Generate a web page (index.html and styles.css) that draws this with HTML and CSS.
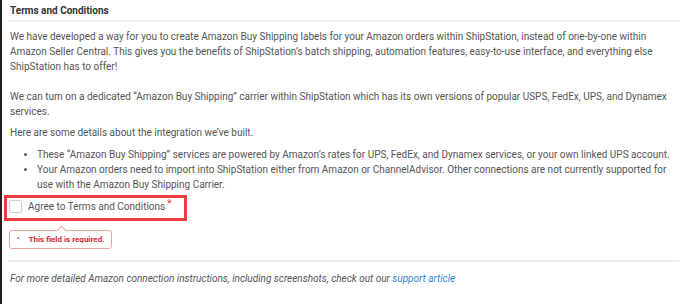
FILE: index.html
```html
<!DOCTYPE html>
<html lang="en">
<head>
<meta charset="utf-8">
<title>Terms and Conditions</title>
<link rel="stylesheet" href="styles.css">
</head>
<body>
<div class="panel">
  <h2 class="panel-title">Terms and Conditions</h2>
  <p class="para para-first">We have developed a way for you to create Amazon Buy Shipping labels for your Amazon orders within ShipStation, instead of one-by-one within Amazon Seller Central. This gives you the benefits of ShipStation’s batch shipping, automation features, easy-to-use interface, and everything else ShipStation has to offer!</p>
  <p class="para para-second">We can turn on a dedicated “Amazon Buy Shipping” carrier within ShipStation which has its own versions of popular USPS, FedEx, UPS, and Dynamex services.</p>
  <p class="para para-third">Here are some details about the integration we’ve built.</p>
  <ul class="details">
    <li>These “Amazon Buy Shipping” services are powered by Amazon’s rates for UPS, FedEx, and Dynamex services, or your own linked UPS account.</li>
    <li>Your Amazon orders need to import into ShipStation either from Amazon or ChannelAdvisor. Other connections are not currently supported for use with the Amazon Buy Shipping Carrier.</li>
  </ul>
  <label class="agree-row">
    <span class="checkbox"></span>
    <span class="agree-text">Agree to Terms and Conditions</span><span class="required">*</span>
  </label>
  <div class="error-tip">
    <span class="error-dot">•</span>
    <span class="error-text">This field is required.</span>
  </div>
  <div class="footer-note">
    For more detailed Amazon connection instructions, including screenshots, check out our <a class="link" href="#">support article</a>
  </div>
</div>
</body>
</html>
```

FILE: styles.css
```css
html, body {
  margin: 0;
  padding: 0;
  height: 100%;
  background: #ffffff;
}
body {
  border-left: 2px solid #1e1e1e;
  box-sizing: border-box;
  font-family: Roboto, "Liberation Sans", Arial, sans-serif;
  font-size: 10px;
  color: #555555;
}
.panel {
  margin: 0 16px 0 6px;
  padding-top: 4px;
}
.panel-title {
  margin: 0;
  padding: 0 2px 2px;
  font-size: 10px;
  line-height: 14px;
  font-weight: 700;
  color: #333333;
  border-bottom: 2px solid #ededed;
}
.para {
  margin: 0;
  padding: 0 2px;
  line-height: 15px;
}
.para-first { margin-top: 7px; }
.para-second { margin-top: 15px; }
.para-third { margin-top: 6px; }
.details {
  margin: 7px 0 0;
  padding: 0 0 0 29px;
  line-height: 15px;
}
.agree-row {
  display: flex;
  align-items: center;
  width: fit-content;
  margin: 3px 0 0 -4px;
  padding: 2px 12px 5px 2px;
  border: 3px solid #ee3b3f;
}
.checkbox {
  width: 11px;
  height: 11px;
  border: 1px solid #cfcfcf;
  border-radius: 2px;
  background: #fff;
  margin-right: 6px;
}
.agree-text {
  font-size: 10px;
  line-height: 13px;
  color: #555555;
}
.required {
  color: #e5383b;
  font-size: 10px;
  line-height: 10px;
  align-self: flex-start;
  margin-left: 2px;
  margin-top: -1px;
}
.error-tip {
  position: relative;
  display: flex;
  align-items: center;
  width: fit-content;
  margin: 9px 0 0 1px;
  padding: 4px 7px 4px 7px;
  border: 1px solid #f0a3a6;
  border-radius: 3px;
  background: #fff;
  color: #d9272e;
  font-size: 8px;
  line-height: 9px;
  font-weight: 700;
}
.error-tip::before {
  content: "";
  position: absolute;
  top: -4px;
  left: 48px;
  width: 6px;
  height: 6px;
  background: #fff;
  border-left: 1px solid #f0a3a6;
  border-top: 1px solid #f0a3a6;
  transform: rotate(45deg);
}
.error-dot {
  font-size: 7px;
  margin-right: 9px;
}
.footer-note {
  margin-top: 11px;
  padding: 9px 2px 0;
  border-top: 2px solid #ececec;
  font-style: italic;
  line-height: 15px;
}
.link {
  color: #2b8ad6;
  text-decoration: none;
}
```
